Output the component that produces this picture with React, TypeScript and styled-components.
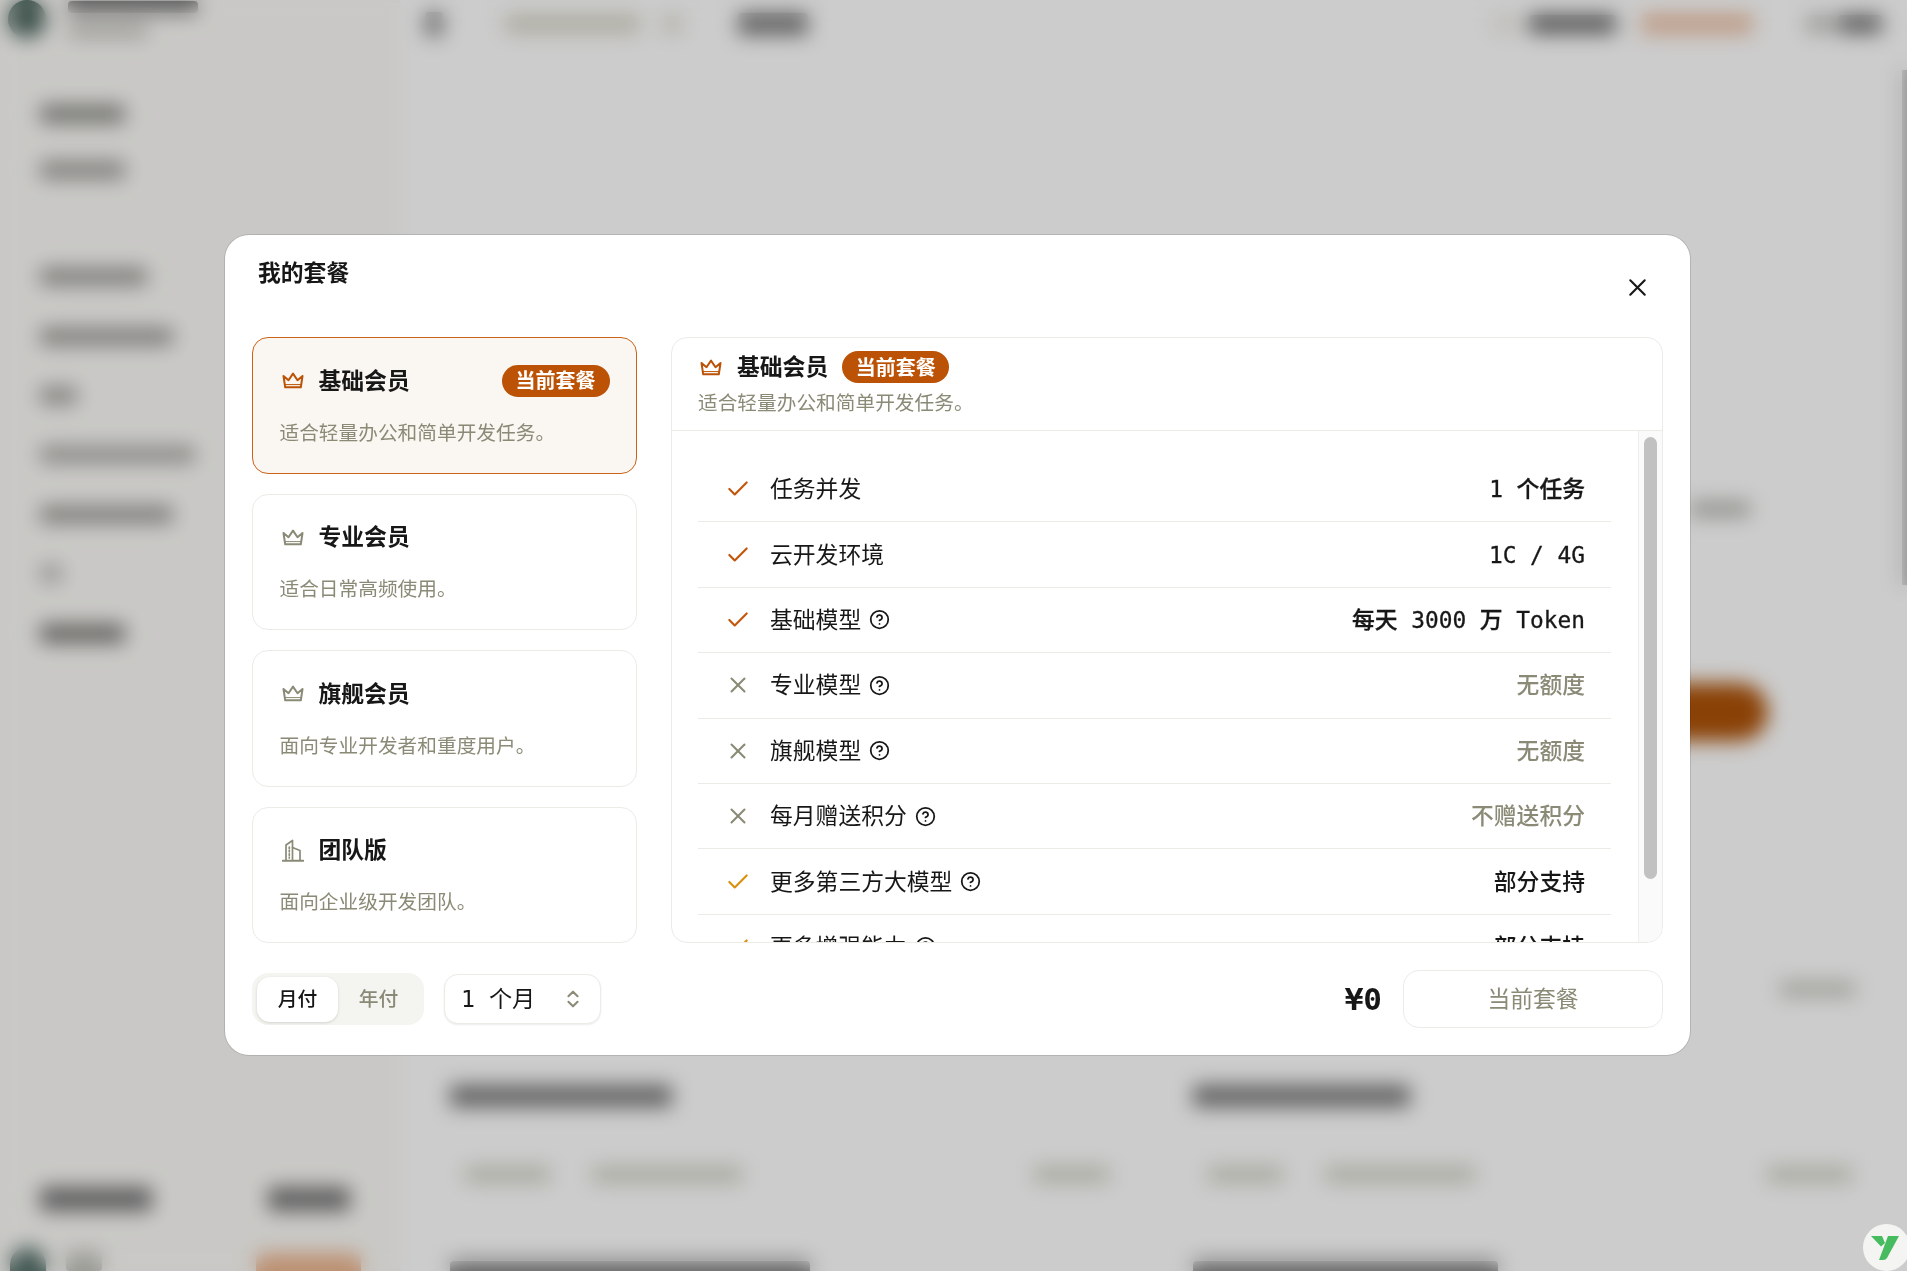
import React from "react";
import styled, { createGlobalStyle } from "styled-components";
import { Check, ChevronsUpDown, CircleHelp, X } from "lucide-react";

const sans = `Inter, "Noto Sans CJK SC", sans-serif`;
const mono = `"DejaVu Sans Mono", "Noto Sans CJK SC", monospace`;
const ink = "#171717";
const muted = "#8a8a76";
const rust = "#bb5205";
const line = "#ecebe6";

const GlobalStyle = createGlobalStyle`
  html, body {
    margin: 0;
    height: 100%;
    overflow: hidden;
    font-family: ${sans};
    color: ${ink};
  }
  * { box-sizing: border-box; }
`;

type Status = "yes" | "no" | "partial";

const features: { label: string; status: Status; value: string; help?: boolean }[] = [
  { label: "任务并发", status: "yes", value: "1 个任务" },
  { label: "云开发环境", status: "yes", value: "1C / 4G" },
  { label: "基础模型", status: "yes", value: "每天 3000 万 Token", help: true },
  { label: "专业模型", status: "no", value: "无额度", help: true },
  { label: "旗舰模型", status: "no", value: "无额度", help: true },
  { label: "每月赠送积分", status: "no", value: "不赠送积分", help: true },
  { label: "更多第三方大模型", status: "partial", value: "部分支持", help: true },
  { label: "更多增强能力", status: "partial", value: "部分支持", help: true },
];

const plans = [
  { name: "基础会员", desc: "适合轻量办公和简单开发任务。", current: true },
  { name: "专业会员", desc: "适合日常高频使用。" },
  { name: "旗舰会员", desc: "面向专业开发者和重度用户。" },
  { name: "团队版", desc: "面向企业级开发团队。", team: true },
];

function CrownIcon({ color }: { color: string }) {
  return (
    <svg width="22" height="17" viewBox="0 0 22 17" fill="none" stroke={color} strokeWidth="2" strokeLinejoin="round" strokeLinecap="round">
      <path d="M1.5 4 L6.5 8.2 L11 1.6 L15.5 8.2 L20.5 4 L18.8 15.3 H3.2 Z" />
      <path d="M3.2 12.6 H18.8" strokeWidth="1" />
    </svg>
  );
}

function BuildingIcon() {
  return (
    <svg width="22" height="23" viewBox="0 0 22 23" fill="none" stroke={muted} strokeWidth="1.7" strokeLinecap="round" strokeLinejoin="round">
      <path d="M0.8 21.8 H21.2" strokeWidth="2" />
      <path d="M4 21 V6 L10.5 1.5 V21" />
      <path d="M10.5 8.5 L18 11.5 V21" />
      <path d="M7.3 8 V19" strokeDasharray="1.4 2" />
    </svg>
  );
}

function LogoMark() {
  return (
    <svg width="28" height="24" viewBox="0 0 28 24" fill="#47bb5f">
      <path d="M0 0 H11 L14 7 L10 10.5 Z" />
      <path d="M17 0 H28 L16 22 Q15 24 12 24 H8 Z" />
    </svg>
  );
}

export default function App() {
  return (
    <>
      <GlobalStyle />
      <Shell>
        <Sidebar>
          <Brand>
            <Avatar />
            <BrandText>
              <Smear $w={130} $h={12} $tone="#777" />
              <Smear $w={80} $h={12} $tone="#bcbcb6" />
            </BrandText>
          </Brand>
          <NavGroup $pitch={56} $top={46}>
            <NavRow><Smear $w={85} $h={18} $tone="#8c8c88" /></NavRow>
            <NavRow><Smear $w={85} $h={18} $tone="#a0a09c" /></NavRow>
          </NavGroup>
          <NavGroup $pitch={59.4} $top={49}>
            <NavRow><Smear $w={107} $h={17} $tone="#999995" /></NavRow>
            <NavRow><Smear $w={133} $h={17} $tone="#999995" /></NavRow>
            <NavRow><Smear $w={37} $h={17} $tone="#a0a09c" /></NavRow>
            <NavRow><Smear $w={155} $h={17} $tone="#aaaaa6" /></NavRow>
            <NavRow><Smear $w={133} $h={17} $tone="#999995" /></NavRow>
            <NavRow><Smear $w={22} $h={17} $tone="#b8b8b4" /></NavRow>
            <NavRow><Smear $w={85} $h={19} $tone="#7c7c78" /></NavRow>
          </NavGroup>
          <SideFooter>
            <FooterRow>
              <Smear $w={112} $h={24} $tone="#777" />
              <Smear $w={82} $h={24} $tone="#777" />
            </FooterRow>
            <UserRow>
              <UserAvatar />
              <Smear $w={36} $h={20} $tone="#c4c4be" />
              <UserPill />
            </UserRow>
          </SideFooter>
        </Sidebar>
        <Main>
          <TopBar>
            <Crumbs>
              <Smear $w={18} $h={24} $tone="#888" />
              <Smear $ml={62} $w={135} $h={18} $tone="#d8d6c8" />
              <Smear $ml={22} $w={20} $h={18} $tone="#e0dfd4" />
              <Smear $ml={56} $w={70} $h={22} $tone="#7c7c7c" />
            </Crumbs>
            <TopActions>
              <Smear $w={30} $h={20} $tone="#f0efe9" />
              <Smear $ml={8} $w={87} $h={18} $tone="#666" />
              <Smear $ml={25} $w={112} $h={20} $tone="#edc3a8" />
              <Smear $ml={53} $w={28} $h={18} $tone="#c4c4c0" />
              <Smear $ml={4} $w={44} $h={18} $tone="#707070" />
            </TopActions>
          </TopBar>
          <Hero>
            <HeroNote>
              <Smear $w={60} $h={14} $tone="#aeb0a8" />
            </HeroNote>
            <HeroButton />
            <HeroTail>
              <Smear $w={75} $h={14} $tone="#c4c4bc" />
            </HeroTail>
          </Hero>
          <CardGrid>
            {[
              { t: 222, a: 85, b: 150, c: 75, n: 360 },
              { t: 217, a: 75, b: 150, c: 85, n: 305 },
            ].map((c, i) => (
              <UsageCard key={i}>
                <Smear $w={c.t} $h={22} $tone="#7c7c7c" />
                <UsageRow>
                  <UsageMeta>
                    <Smear $w={c.a} $h={15} $tone="#cfcfc4" />
                    <Smear $w={c.b} $h={15} $tone="#cfcfc4" />
                  </UsageMeta>
                  <Smear $w={c.c} $h={15} $tone="#cfcfc4" />
                </UsageRow>
                <Smear $w={c.n} $h={22} $tone="#808080" />
              </UsageCard>
            ))}
          </CardGrid>
        </Main>
        <PageScroll />
      </Shell>

      <Overlay>
        <Dialog>
          <DialogTitle>我的套餐</DialogTitle>
          <CloseButton aria-label="关闭">
            <X size={29} strokeWidth={1.7} />
          </CloseButton>
          <Body>
            <PlanList>
              {plans.map((p) => (
                <PlanCard key={p.name} $active={!!p.current}>
                  <PlanHead>
                    <PlanIcon>
                      {p.team ? <BuildingIcon /> : <CrownIcon color={p.current ? rust : muted} />}
                    </PlanIcon>
                    <PlanName>{p.name}</PlanName>
                    {p.current && <PlanBadge>当前套餐</PlanBadge>}
                  </PlanHead>
                  <PlanDesc>{p.desc}</PlanDesc>
                </PlanCard>
              ))}
            </PlanList>
            <Detail>
              <DetailHead>
                <DetailTitle>
                  <PlanIcon>
                    <CrownIcon color={rust} />
                  </PlanIcon>
                  <PlanName>基础会员</PlanName>
                  <Badge>当前套餐</Badge>
                </DetailTitle>
                <DetailDesc>适合轻量办公和简单开发任务。</DetailDesc>
              </DetailHead>
              <DetailBody>
                <Rows>
                  {features.map((f) => (
                    <Row key={f.label}>
                      <StatusIcon $status={f.status}>
                        {f.status === "no" ? <X size={26} strokeWidth={1.9} /> : <Check size={26} strokeWidth={2} />}
                      </StatusIcon>
                      <Label>{f.label}</Label>
                      {f.help && <CircleHelp size={21} strokeWidth={2} color={ink} />}
                      <Value $status={f.status}>{f.value}</Value>
                    </Row>
                  ))}
                </Rows>
                <Track>
                  <Thumb />
                </Track>
              </DetailBody>
            </Detail>
          </Body>
          <Footer>
            <Segmented>
              <Segment $on>月付</Segment>
              <Segment>年付</Segment>
            </Segmented>
            <Select>
              <SelectText>1 个月</SelectText>
              <ChevronsUpDown size={22} strokeWidth={2.2} color={muted} />
            </Select>
            <Price>¥0</Price>
            <CurrentButton>当前套餐</CurrentButton>
          </Footer>
        </Dialog>
      </Overlay>
      <Widget>
        <LogoMark />
      </Widget>
    </>
  );
}

const Shell = styled.div`
  display: flex;
  height: 100vh;
  overflow: hidden;
  background: #ffffff;
`;

const Sidebar = styled.aside`
  width: 400px;
  flex: none;
  display: flex;
  flex-direction: column;
  padding-left: 40px;
  background: #fcfbf8;
`;

const Smear = styled.div<{ $w: number; $h: number; $tone: string; $ml?: number }>`
  width: ${(p) => p.$w}px;
  height: ${(p) => p.$h}px;
  flex: none;
  margin-left: ${(p) => p.$ml ?? 0}px;
  background: ${(p) => p.$tone};
  border-radius: 4px;
`;

const Brand = styled.div`
  height: 40px;
  display: flex;
  gap: 22px;
  margin-left: -32px;
`;

const Avatar = styled.div`
  width: 38px;
  height: 38px;
  flex: none;
  border-radius: 50%;
  background: #4d665e;
`;

const BrandText = styled.div`
  display: flex;
  flex-direction: column;
  gap: 12px;
  padding-top: 1px;
`;

const NavGroup = styled.div<{ $pitch: number; $top: number }>`
  display: grid;
  grid-auto-rows: ${(p) => p.$pitch}px;
  margin-top: ${(p) => p.$top}px;
`;

const NavRow = styled.div`
  display: flex;
  align-items: center;
`;

const SideFooter = styled.div`
  margin-top: auto;
  height: 84px;
  display: flex;
  flex-direction: column;
  justify-content: space-between;
`;

const FooterRow = styled.div`
  display: flex;
  justify-content: space-between;
  width: 310px;
`;

const UserRow = styled.div`
  display: flex;
  align-items: flex-end;
  gap: 20px;
  margin-left: -30px;
  height: 24px;
`;

const UserAvatar = styled.div`
  width: 36px;
  height: 24px;
  border-radius: 18px 18px 0 0;
  background: #56706a;
`;

const UserPill = styled.div`
  width: 105px;
  height: 18px;
  margin-left: 134px;
  background: #ecb690;
  border-radius: 6px 6px 0 0;
`;

const Main = styled.main`
  flex: 1;
  min-width: 0;
  display: flex;
  flex-direction: column;
  overflow: hidden;
`;

const TopBar = styled.header`
  height: 48px;
  flex: none;
  display: flex;
  align-items: center;
  justify-content: space-between;
  padding: 0 25px;
`;

const Crumbs = styled.div`
  display: flex;
  align-items: center;
`;

const TopActions = styled.div`
  display: flex;
  align-items: center;
`;

const Hero = styled.section`
  height: 1037px;
  flex: none;
  display: flex;
  flex-direction: column;
  align-items: flex-end;
  padding-top: 454px;
`;

const HeroNote = styled.div`
  margin-right: 157px;
`;

const HeroButton = styled.div`
  width: 170px;
  height: 58px;
  margin: 167px 139px 0 0;
  border-radius: 29px;
  background: #ad5208;
`;

const HeroTail = styled.div`
  margin: 241px 52px 0 0;
`;

const CardGrid = styled.section`
  display: grid;
  grid-template-columns: 723px 723px;
  column-gap: 20px;
  padding-left: 32px;
`;

const UsageCard = styled.div`
  display: flex;
  flex-direction: column;
  padding: 0 46px 0 18px;
`;

const UsageRow = styled.div`
  display: flex;
  justify-content: space-between;
  margin: 60px 0 79px;
  padding-left: 15px;
`;

const UsageMeta = styled.div`
  display: flex;
  gap: 42px;
`;

const PageScroll = styled.div`
  position: fixed;
  top: 70px;
  right: 0;
  width: 5px;
  height: 515px;
  background: #b4b4b4;
`;

const Overlay = styled.div`
  position: fixed;
  inset: 0;
  padding: 235px 0 0 225px;
  background: rgba(0, 0, 0, 0.2);
  backdrop-filter: blur(10px);
`;

const Dialog = styled.div`
  position: relative;
  width: 1465px;
  height: 820px;
  padding: 0 27px;
  background: #ffffff;
  border-radius: 24px;
  box-shadow: 0 0 0 1px rgba(0, 0, 0, 0.12);
`;

const DialogTitle = styled.h2`
  height: 102px;
  margin: 0;
  padding-top: 22px;
  padding-left: 6px;
  font-size: 22.8px;
  line-height: 32px;
  font-weight: 600;
`;

const CloseButton = styled.button`
  position: absolute;
  top: 38px;
  right: 38px;
  width: 29px;
  height: 29px;
  padding: 0;
  border: 0;
  background: none;
  color: ${ink};
  display: flex;
`;

const Body = styled.div`
  display: grid;
  grid-template-columns: 385px 992px;
  column-gap: 34px;
  height: 606px;
`;

const PlanList = styled.div`
  display: grid;
  grid-auto-rows: 136.5px;
  row-gap: 20px;
`;

const PlanCard = styled.div<{ $active: boolean }>`
  padding: 26.5px 26.5px 0;
  border: 1.5px solid ${(p) => (p.$active ? "#cc6218" : line)};
  border-radius: 16px;
  background: ${(p) => (p.$active ? "#faf6f2" : "#ffffff")};
`;

const PlanHead = styled.div`
  display: flex;
  align-items: center;
  height: 32px;
`;

const PlanIcon = styled.span`
  display: flex;
  align-items: center;
  width: 22px;
  height: 24px;
  flex: none;
  margin: 0 15px 0 2px;
`;

const PlanName = styled.span`
  font-size: 22.8px;
  line-height: 32px;
  font-weight: 600;
`;

const Badge = styled.span`
  display: inline-flex;
  align-items: center;
  justify-content: center;
  width: 107px;
  height: 32px;
  margin-left: 14px;
  padding-bottom: 2px;
  border-radius: 16px;
  background: ${rust};
  color: #ffffff;
  font-size: 20px;
  font-weight: 600;
`;

const PlanBadge = styled(Badge)`
  width: 108px;
  margin-left: auto;
`;

const PlanDesc = styled.p`
  margin: 21px 0 0;
  font-size: 19.7px;
  line-height: 30px;
  color: ${muted};
`;

const Detail = styled.section`
  display: flex;
  flex-direction: column;
  min-height: 0;
  border: 1.5px solid ${line};
  border-radius: 16px;
  overflow: hidden;
`;

const DetailHead = styled.header`
  height: 93px;
  flex: none;
  padding: 13px 26px 0;
  border-bottom: 1.5px solid ${line};
`;

const DetailTitle = styled.div`
  display: flex;
  align-items: center;
  height: 32px;
`;

const DetailDesc = styled.p`
  margin: 5px 0 0;
  font-size: 19.7px;
  line-height: 30px;
  color: ${muted};
`;

const DetailBody = styled.div`
  flex: 1;
  min-height: 0;
  display: flex;
`;

const Rows = styled.div`
  flex: 1;
  min-width: 0;
  padding: 26px 27px 0 26px;
  overflow: hidden;
`;

const Row = styled.div`
  display: flex;
  align-items: center;
  gap: 8px;
  height: 65.4px;
  padding: 0 26px 0 27px;
  border-bottom: 1.5px solid ${line};
`;

const StatusIcon = styled.span<{ $status: Status }>`
  width: 26px;
  flex: none;
  margin-right: 11px;
  display: flex;
  justify-content: center;
  color: ${(p) => (p.$status === "yes" ? "#c2570c" : p.$status === "partial" ? "#d9920f" : muted)};
`;

const Label = styled.span`
  font-size: 22.8px;
  line-height: 32px;
`;

const Value = styled.span<{ $status: Status }>`
  margin-left: auto;
  font-family: ${(p) => (p.$status === "yes" ? mono : sans)};
  font-size: 22.8px;
  line-height: 32px;
  font-weight: 500;
  white-space: pre;
  -webkit-text-stroke: ${(p) => (p.$status === "yes" ? "0.3px" : "0")};
  color: ${(p) => (p.$status === "no" ? muted : ink)};
`;

const Track = styled.div`
  width: 24px;
  flex: none;
  padding: 6px 5px 0;
  background: #fafafa;
  border-left: 1.5px solid #efefef;
`;

const Thumb = styled.div`
  width: 13px;
  height: 442px;
  border-radius: 7px;
  background: #c1c1c1;
`;

const Footer = styled.footer`
  height: 112px;
  display: flex;
  align-items: center;
`;

const Segmented = styled.div`
  display: flex;
  width: 172px;
  height: 52px;
  padding: 4px 5px;
  border-radius: 16px;
  background: #f4f4f0;
`;

const Segment = styled.div<{ $on?: boolean }>`
  width: 81px;
  height: 45px;
  padding-bottom: 5px;
  display: flex;
  align-items: center;
  justify-content: center;
  border-radius: 13px;
  font-size: 19.8px;
  font-weight: 500;
  color: ${(p) => (p.$on ? ink : muted)};
  background: ${(p) => (p.$on ? "#ffffff" : "transparent")};
  box-shadow: ${(p) => (p.$on ? "0 1px 3px rgba(0, 0, 0, 0.14)" : "none")};
`;

const Select = styled.div`
  width: 157px;
  height: 50px;
  margin-left: 20px;
  padding: 0 16px;
  display: flex;
  align-items: center;
  justify-content: space-between;
  border: 1.5px solid ${line};
  border-radius: 14px;
  background: #ffffff;
  box-shadow: 0 1px 2px rgba(0, 0, 0, 0.08);
  font-family: ${mono};
  font-size: 23.2px;
  white-space: pre;
`;

const SelectText = styled.span`
  padding-bottom: 4px;
`;

const Price = styled.div`
  margin-left: auto;
  margin-right: 21px;
  font-family: ${mono};
  font-size: 31px;
  font-weight: 700;
`;

const CurrentButton = styled.button`
  width: 260px;
  height: 58px;
  padding: 0 0 3px;
  border: 1.5px solid ${line};
  border-radius: 16px;
  background: #ffffff;
  font-family: ${sans};
  font-size: 22.8px;
  color: ${muted};
`;

const Widget = styled.div`
  position: fixed;
  left: 1863px;
  top: 1224px;
  width: 47px;
  height: 47px;
  display: flex;
  align-items: center;
  justify-content: center;
  padding-right: 4px;
  border-radius: 50%;
  background: #f4f4f2;
`;
